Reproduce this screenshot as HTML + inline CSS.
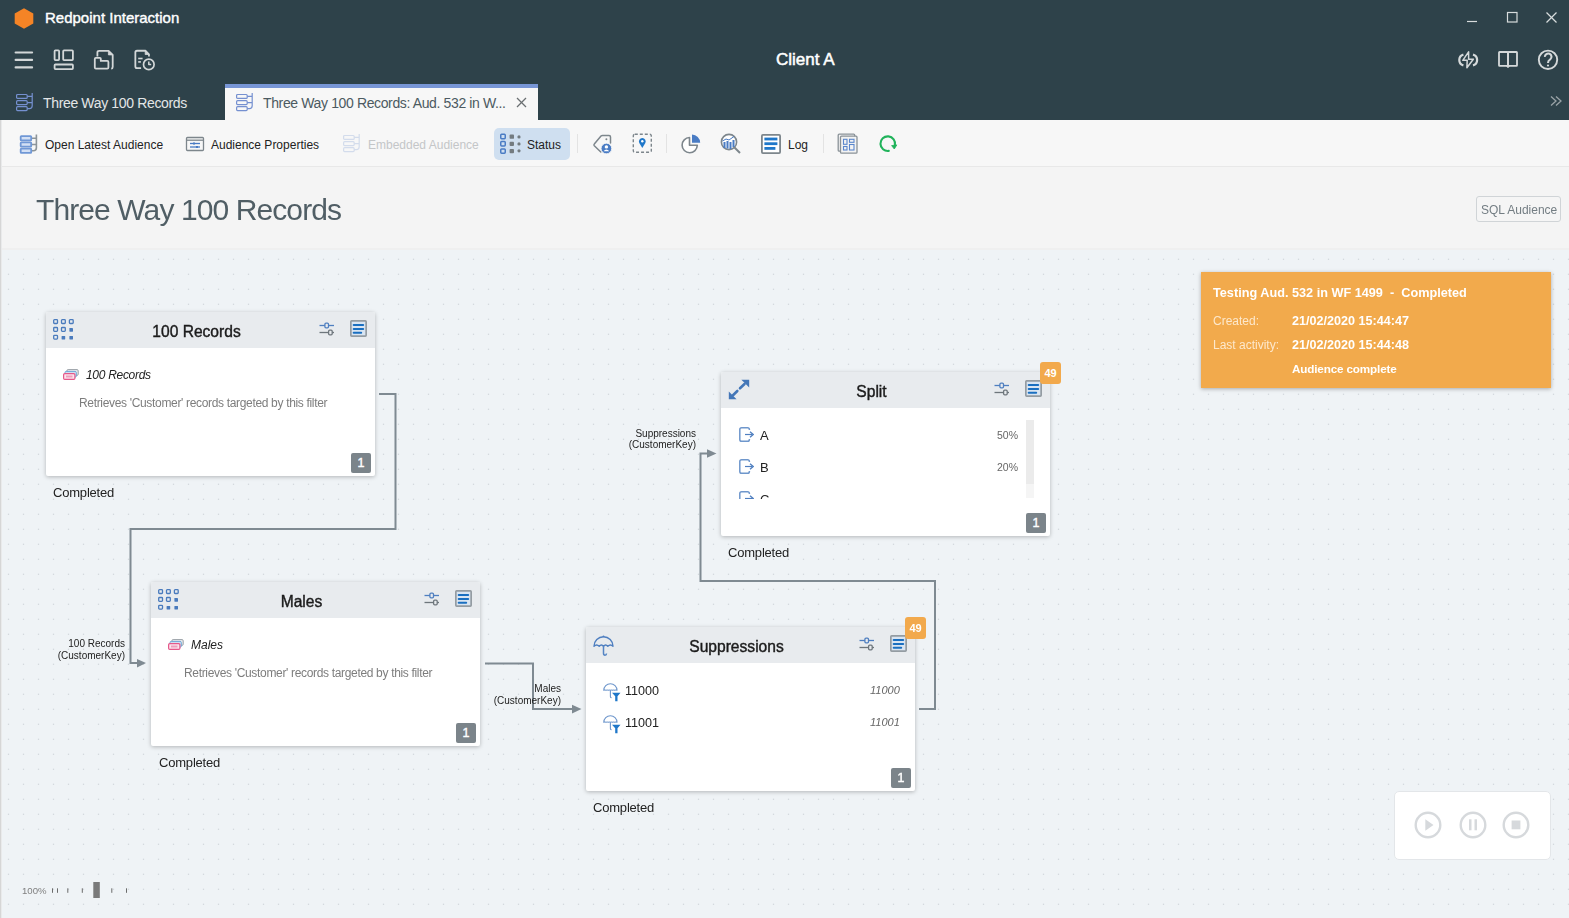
<!DOCTYPE html>
<html><head><meta charset="utf-8">
<style>
*{box-sizing:border-box;margin:0;padding:0}
html,body{width:1569px;height:918px;overflow:hidden;font-family:"Liberation Sans",sans-serif;background:#eff3f6}
.abs{position:absolute}
#hdr{position:absolute;left:0;top:0;width:1569px;height:120px;background:#2e424a}
.t{position:absolute;white-space:nowrap;line-height:1}
#hdr .t{color:#fff}
#toolbar{position:absolute;left:0;top:120px;width:1569px;height:47px;background:#f7f7f7;border-bottom:1px solid #e8e8e8}
#ph{position:absolute;left:0;top:167px;width:1569px;height:83px;background:#f4f4f4;border-bottom:2px solid #efefef}
#canvas{position:absolute;left:0;top:252px;width:1569px;height:666px;background-color:#eff3f6;
}
#lborder{position:absolute;left:0;top:120px;width:2px;height:798px;background:linear-gradient(90deg,#d6d6d6 0,#d6d6d6 1px,#e9eaeb 1px)}
.tbt{position:absolute;font-size:12px;color:#222;white-space:nowrap;line-height:1}
.node{position:absolute;width:329px;height:164px;background:#fff;border-radius:2px;box-shadow:0 1px 4px rgba(0,0,0,0.26)}
.nh{position:absolute;left:0;top:0;width:329px;height:36px;background:#e8ebee;border-radius:2px 2px 0 0}
.nt{position:absolute;left:-14px;width:329px;top:12px;text-align:center;font-size:15.6px;color:#1b1b1b;line-height:1;-webkit-text-stroke:0.4px #1b1b1b}
.badge1{position:absolute;width:20px;height:20px;background:#7b848a;color:#fff;font-size:12.5px;-webkit-text-stroke:0.4px #fff;text-align:center;line-height:20px;border-radius:2px}
.badge49{position:absolute;width:21px;height:22px;background:#f2a94c;color:#fff;font-size:11px;font-weight:bold;text-align:center;line-height:22px;border-radius:3px}
.stat{position:absolute;font-size:13px;letter-spacing:-0.2px;color:#222;white-space:nowrap;line-height:1}
.lbl{position:absolute;font-size:10px;color:#222;text-align:right;line-height:11.5px;white-space:nowrap}
</style></head><body>
<div id="hdr">
  <svg class="abs" style="left:14px;top:8px" width="20" height="21" viewBox="0 0 20 21"><polygon points="10,0.2 19.3,5.4 19.3,15.6 10,20.8 0.7,15.6 0.7,5.4" fill="#f58426"/></svg>
  <div class="t" style="left:45px;top:10px;font-size:15px;-webkit-text-stroke:0.4px #fff">Redpoint Interaction</div>
  <!-- window controls -->
  <svg class="abs" style="left:1460px;top:8px" width="105" height="20" viewBox="0 0 105 20" fill="none" stroke="#d8dcdd" stroke-width="1.2">
    <line x1="7" y1="13.5" x2="17" y2="13.5"/>
    <rect x="47.5" y="4.5" width="9.5" height="9.5"/>
    <line x1="86.5" y1="4.5" x2="96.5" y2="14.5"/><line x1="96.5" y1="4.5" x2="86.5" y2="14.5"/>
  </svg>
  <!-- row 2 icons -->
  <svg class="abs" style="left:10px;top:44px" width="150" height="32" viewBox="0 0 150 32" fill="none" stroke="#d3d7d8" stroke-width="1.8" stroke-linejoin="round">
    <g stroke-width="2.1" stroke-linecap="round"><line x1="5.6" y1="8.5" x2="22.1" y2="8.5"/><line x1="5.6" y1="15.9" x2="22.1" y2="15.9"/><line x1="5.6" y1="23.4" x2="22.1" y2="23.4"/></g>
    <rect x="44.6" y="6.4" width="4.5" height="9.7" rx="0.8"/><rect x="53.2" y="6.4" width="9.7" height="9.7" rx="0.8"/><rect x="44.6" y="20.5" width="18.3" height="4.6" rx="0.8"/>
    <path d="M87.4 12.5 V8.5 Q87.4 6.8 89.1 6.8 H98.6 L102.7 10.9 V23 Q102.7 24.6 101.2 24.6"/>
    <path d="M98.4 6.9 V10.9 H102.6 Z" fill="#d3d7d8" stroke-width="0.8"/>
    <path d="M84.8 15 Q84.8 13.9 85.9 13.9 H89.9 Q90.8 13.9 90.8 14.8 V16.9 H97.3 Q98.4 16.9 98.4 18 V23.6 Q98.4 24.6 97.3 24.6 H85.9 Q84.8 24.6 84.8 23.5 Z"/>
    <path d="M131.1 24.15 H127 Q125.35 24.15 125.35 22.5 V8.4 Q125.35 6.75 127 6.75 H135.4 L138.95 10.3 V12.4"/>
    <path d="M135.2 6.9 V10.5 H138.8 Z" fill="#d3d7d8" stroke-width="0.8"/>
    <g stroke-width="1.6"><line x1="128.2" y1="14.5" x2="132.6" y2="14.5"/><line x1="128.2" y1="17.9" x2="130.9" y2="17.9"/></g>
    <circle cx="138.8" cy="20.4" r="5.3" stroke-width="1.7"/>
    <path d="M138.8 17.6 V20.6 H141.2" stroke-width="1.5"/>
  </svg>
  <div class="t" style="left:776px;top:51px;font-size:17px;-webkit-text-stroke:0.5px #fff">Client A</div>
  <svg class="abs" style="left:1455px;top:46px" width="110" height="28" viewBox="0 0 110 28" fill="none" stroke="#d5d9da" stroke-width="2">
    <path d="M8.4 8.6 A5.6 5.6 0 0 0 8.4 19.4" stroke-width="2.2"/><path d="M18 8.6 A5.6 5.6 0 0 1 18 19.4" stroke-width="2.2"/>
    <path d="M13.6 5.8 L7.8 14.3 H12.2 L11.9 21.8 L18.3 13.2 H13.6 Z" stroke-width="1.5" stroke-linejoin="round"/>
    <rect x="44" y="6" width="9" height="13.8" rx="0.6" stroke-width="1.8"/><rect x="53" y="6" width="9" height="13.8" rx="0.6" stroke-width="1.8"/>
    <path d="M51.5 20.2 L53 21.6 L54.5 20.2 Z" fill="#d5d9da" stroke-width="1"/>
    <circle cx="93" cy="13.8" r="9.2" stroke-width="1.9"/>
    <path d="M89.9 10.9 A3.3 3.3 0 1 1 95.2 13.4 Q93 14.6 93 17" stroke-width="2.1"/><circle cx="93" cy="19.5" r="1.1" fill="#d5d9da" stroke="none"/>
  </svg>
  <!-- tabs -->
  <svg class="abs" style="left:14px;top:92px" width="22" height="21" viewBox="0 0 22 21" fill="none" stroke="#7590d0" stroke-width="1.2">
    <rect x="2.6" y="2.5" width="10.6" height="3.9" rx="1"/><rect x="2.6" y="8.7" width="10.6" height="3.9" rx="1"/><rect x="2.6" y="14.7" width="10.6" height="3.9" rx="1"/>
    <path d="M13.2 4.3 H18.2 M18.2 1 V13.8 Q18.2 16.6 15.4 16.6 H13.2 M13.2 10.6 H18.2" fill="none"/>
  </svg>
  <div class="t" style="left:43px;top:95.5px;font-size:14px;letter-spacing:-0.35px;color:#e3e6e7">Three Way 100 Records</div>
  <div class="abs" style="left:225px;top:84px;width:313px;height:36px;background:#f7f7f7;border-top:4px solid #7896d6"></div>
  <svg class="abs" style="left:234px;top:92px" width="22" height="21" viewBox="0 0 22 21" fill="none" stroke="#7590d0" stroke-width="1.2">
    <rect x="2.6" y="2.5" width="10.6" height="3.9" rx="1"/><rect x="2.6" y="8.7" width="10.6" height="3.9" rx="1"/><rect x="2.6" y="14.7" width="10.6" height="3.9" rx="1"/>
    <path d="M13.2 4.3 H18.2 M18.2 1 V13.8 Q18.2 16.6 15.4 16.6 H13.2 M13.2 10.6 H18.2" fill="none"/>
  </svg>
  <div class="t" style="left:263px;top:95.5px;font-size:14px;letter-spacing:-0.37px;color:#4c5a61">Three Way 100 Records: Aud. 532 in W...</div>
  <svg class="abs" style="left:514px;top:95px" width="14" height="14" viewBox="0 0 14 14" stroke="#6a6f72" stroke-width="1.2"><line x1="3" y1="3" x2="12" y2="12"/><line x1="12" y1="3" x2="3" y2="12"/></svg>
  <svg class="abs" style="left:1548px;top:94px" width="16" height="14" viewBox="0 0 16 14" fill="none" stroke="#9aa3a7" stroke-width="1.3"><path d="M3 2.5 L8 7 L3 11.5 M8 2.5 L13 7 L8 11.5"/></svg>
</div>
<div id="toolbar">
  <!-- open latest audience icon -->
  <svg class="abs" style="left:18px;top:14px" width="22" height="21" viewBox="0 0 22 21" stroke-width="1.6">
    <path d="M13.2 4.3 H18.4 M18.4 0.5 V13.7 Q18.4 16.7 15.4 16.7 H13.2 M13.2 10.5 H18.4" fill="none" stroke="#8d959a"/>
    <g fill="#d3e0f5" stroke="#7098d6" stroke-width="1.8"><rect x="2.7" y="2.2" width="10.5" height="4.2" rx="0.6"/><rect x="2.7" y="8.4" width="10.5" height="4.2" rx="0.6"/><rect x="2.7" y="14.6" width="10.5" height="4.2" rx="0.6"/></g>
  </svg>
  <div class="tbt" style="left:45px;top:18.7px">Open Latest Audience</div>
  <!-- audience properties icon -->
  <svg class="abs" style="left:185px;top:16px" width="20" height="16" viewBox="0 0 20 16" fill="none" stroke="#7d868c" stroke-width="1.3">
    <rect x="1.5" y="1.5" width="17" height="13" rx="1"/><line x1="1.5" y1="4.2" x2="18.5" y2="4.2"/>
    <line x1="5" y1="7.5" x2="15" y2="7.5" stroke="#4a7cc4"/><line x1="5" y1="11" x2="15" y2="11" stroke="#4a7cc4"/>
    <rect x="8" y="6.5" width="2" height="2" fill="#4a7cc4" stroke="none"/><rect x="11" y="10" width="2" height="2" fill="#4a7cc4" stroke="none"/>
  </svg>
  <div class="tbt" style="left:211px;top:18.7px">Audience Properties</div>
  <!-- embedded audience (disabled) -->
  <svg class="abs" style="left:341px;top:13px" width="22" height="21" viewBox="0 0 22 21" fill="none" stroke="#d3dcec" stroke-width="1.2">
    <rect x="2.6" y="2.5" width="10.6" height="3.9" rx="1"/><rect x="2.6" y="8.7" width="10.6" height="3.9" rx="1"/><rect x="2.6" y="14.7" width="10.6" height="3.9" rx="1"/>
    <path d="M13.2 4.3 H18.2 M18.2 1 V13.8 Q18.2 16.6 15.4 16.6 H13.2 M13.2 10.6 H18.2" fill="none"/>
  </svg>
  <div class="tbt" style="left:368px;top:18.7px;color:#c4c6c8">Embedded Audience</div>
  <!-- status button -->
  <div class="abs" style="left:494px;top:8px;width:76px;height:32px;background:#cfdff0;border-radius:5px"></div>
  <svg class="abs" style="left:499px;top:13px" width="24" height="22" viewBox="0 0 24 22">
    <g fill="none" stroke="#4a7cc4" stroke-width="1.5"><rect x="1.75" y="1.35" width="4.5" height="4.3" rx="0.9"/><rect x="1.75" y="8.6" width="4.5" height="4.3" rx="0.9"/><rect x="1.75" y="15.9" width="4.5" height="4.3" rx="0.9"/></g>
    <g fill="#737b80"><rect x="10.6" y="1.6" width="4.4" height="4.2" rx="0.9"/><rect x="10.6" y="8.8" width="4.4" height="4.2" rx="0.9"/><rect x="10.6" y="16" width="4.4" height="4.2" rx="0.9"/>
    <circle cx="20" cy="3.9" r="1.6"/><circle cx="20" cy="10.9" r="1.6"/><circle cx="20" cy="17.8" r="1.6"/></g>
  </svg>
  <div class="tbt" style="left:527px;top:18.5px">Status</div>
  <div class="abs" style="left:577px;top:14px;width:1px;height:19px;background:#e3e3e3"></div>
  <!-- tag person -->
  <svg class="abs" style="left:590px;top:12px" width="24" height="24" viewBox="0 0 24 24">
    <path d="M10.8 20 L4.3 13.8 Q3.5 13 4.3 12.1 L11 4.1 Q11.6 3.4 12.5 3.4 H19 Q20.5 3.4 20.5 4.9 V11" fill="none" stroke="#7d868c" stroke-width="1.5" stroke-linejoin="round" stroke-linecap="round"/>
    <circle cx="16.4" cy="7.3" r="1" fill="#7d868c"/>
    <circle cx="16.4" cy="16.5" r="5.3" fill="#4a7cc4" stroke="#f7f7f7" stroke-width="0.8"/><circle cx="16.4" cy="14.9" r="1.7" fill="#fff"/><path d="M13.5 19.2 Q16.4 15.8 19.3 19.2 Z" fill="#fff"/>
  </svg>
  <!-- dashed pin -->
  <svg class="abs" style="left:632px;top:13px" width="22" height="22" viewBox="0 0 22 22">
    <rect x="1.3" y="1.3" width="18" height="18" rx="1.5" fill="none" stroke="#7d868c" stroke-width="1.4" stroke-dasharray="3 2"/>
    <path d="M10.3 15 L7.3 10 A3.4 3.4 0 1 1 13.3 10 Z" fill="#1f77c9"/><circle cx="10.3" cy="8.2" r="1.2" fill="#fff"/>
  </svg>
  <div class="abs" style="left:666px;top:14px;width:1px;height:19px;background:#e3e3e3"></div>
  <!-- pie -->
  <svg class="abs" style="left:679px;top:12px" width="24" height="24" viewBox="0 0 24 24">
    <path d="M10.5 5.5 A7.6 7.6 0 1 0 18.3 13.3 H10.5 Z" fill="#fff" stroke="#7d868c" stroke-width="1.6" stroke-linejoin="round"/>
    <path d="M13 2.5 A8.5 8.5 0 0 1 21.2 10.8 H13 Z" fill="#4a7cc4"/>
  </svg>
  <!-- magnifier chart -->
  <svg class="abs" style="left:719px;top:12px" width="24" height="24" viewBox="0 0 24 24">
    <circle cx="10" cy="10" r="7.6" fill="#fff" stroke="#7d868c" stroke-width="1.6"/>
    <line x1="15.5" y1="15.5" x2="21" y2="21" stroke="#7d868c" stroke-width="2"/>
    <g fill="#4a7cc4"><rect x="4.5" y="10" width="2" height="6"/><rect x="7.5" y="9" width="2" height="7.5"/><rect x="10.5" y="10" width="2" height="7"/><rect x="13.5" y="8" width="2" height="7"/></g>
    <path d="M3.5 9 L7 7 L10 8 L15 4.5" fill="none" stroke="#4a7cc4" stroke-width="1"/>
  </svg>
  <!-- log -->
  <svg class="abs" style="left:760px;top:13px" width="22" height="22" viewBox="0 0 22 22">
    <rect x="1.9" y="1.9" width="18.2" height="18.2" rx="1" fill="#fff" stroke="#7d868c" stroke-width="1.8"/>
    <rect x="4.4" y="4.6" width="13" height="2.8" fill="#1f77c9"/><rect x="4.4" y="9.3" width="13" height="2.8" fill="#1f77c9"/><rect x="4.4" y="14" width="11" height="2.8" fill="#1f77c9"/>
  </svg>
  <div class="tbt" style="left:788px;top:18.7px">Log</div>
  <div class="abs" style="left:823px;top:14px;width:1px;height:19px;background:#e3e3e3"></div>
  <!-- multi -->
  <svg class="abs" style="left:837px;top:13px" width="22" height="22" viewBox="0 0 22 22">
    <rect x="1.2" y="1.2" width="16.5" height="17" rx="1" fill="#f3f3f3" stroke="#8a9298" stroke-width="1.3"/>
    <rect x="3.5" y="3.2" width="16.5" height="17" rx="1" fill="#f3f3f3" stroke="#8a9298" stroke-width="1.3"/>
    <g fill="none" stroke="#5a86cc" stroke-width="1.1"><rect x="6.5" y="6.3" width="3.5" height="5"/><rect x="12.5" y="6.3" width="4.5" height="3"/><rect x="6.5" y="13.5" width="3.5" height="3.5"/><rect x="12.5" y="11.5" width="4.5" height="5.5"/></g>
  </svg>
  <!-- refresh -->
  <svg class="abs" style="left:877px;top:13px" width="22" height="22" viewBox="0 0 22 22">
    <path d="M11.8 17.9 A7.3 7.3 0 1 1 17.9 12.2" fill="none" stroke="#21b35b" stroke-width="2.1" stroke-linecap="round"/>
    <path d="M14.6 12.6 L19.8 11.9 L17.3 16 Z" fill="#21b35b" stroke="#21b35b" stroke-width="0.8" stroke-linejoin="round"/>
  </svg>
</div>

<div id="ph">
  <div class="t" style="left:36px;top:195px;font-size:30px;color:#505e65;letter-spacing:-0.9px;position:fixed">Three Way 100 Records</div>
  <div class="abs" style="left:1476px;top:29px;width:85px;height:26px;border:1px solid #d0d4d7;border-radius:3px;background:#f5f5f5"></div>
  <div class="t" style="left:1481px;top:204px;position:fixed;font-size:12px;color:#737d83">SQL Audience</div>
</div>

<div id="canvas"></div>
<svg class="abs" style="left:0;top:252px" width="1569" height="666"><defs><pattern id="dots" x="0" y="0" width="15" height="15" patternUnits="userSpaceOnUse"><rect x="7.85" y="6.6" width="1.3" height="1.35" fill="#d4d8dd"/></pattern></defs><rect width="1569" height="666" fill="url(#dots)"/></svg>
<svg width="0" height="0" style="position:absolute">
 <defs>
  <symbol id="grid" viewBox="0 0 22 22">
   <g fill="none" stroke="#4a7bbd" stroke-width="1.3">
    <rect x="0.7" y="0.7" width="3.8" height="3.8" rx="0.8"/><rect x="8.5" y="0.7" width="3.8" height="3.8" rx="0.8"/><rect x="16.4" y="0.7" width="3.8" height="3.8" rx="0.8"/>
    <rect x="0.7" y="8.5" width="3.8" height="3.8" rx="0.8"/><rect x="8.5" y="8.5" width="3.8" height="3.8" rx="0.8"/>
    <rect x="0.7" y="16.3" width="3.8" height="3.8" rx="0.8"/>
   </g>
   <g fill="#4a7bbd"><rect x="16.4" y="9.1" width="3.6" height="3.6" rx="0.4"/><rect x="8.6" y="16.9" width="3.6" height="3.6" rx="0.4"/><rect x="16.4" y="16.9" width="3.6" height="3.6" rx="0.4"/></g>
  </symbol>
  <symbol id="sliders" viewBox="0 0 16 14">
   <g stroke-width="1.3" fill="none">
    <line x1="0.5" y1="3.5" x2="15" y2="3.5" stroke="#4f7fc0"/><rect x="5.9" y="1.1" width="3.6" height="4.8" rx="1.1" fill="#e8ebee" stroke="#4f7fc0"/>
    <line x1="0.5" y1="10.5" x2="15" y2="10.5" stroke="#6e767c"/><rect x="9.6" y="8.1" width="3.6" height="4.8" rx="1.1" fill="#e8ebee" stroke="#6e767c"/>
   </g>
  </symbol>
  <symbol id="list" viewBox="0 0 17 17">
   <rect x="0.85" y="0.85" width="15.3" height="15.3" rx="0.8" fill="#d9e5f2" stroke="#949ca2" stroke-width="1.7"/>
   <g stroke="#1a6fc0" stroke-width="2" stroke-linecap="round"><line x1="3.7" y1="5" x2="13.2" y2="5"/><line x1="3.7" y1="8.9" x2="13.2" y2="8.9"/><line x1="3.7" y1="12.8" x2="11.2" y2="12.8"/></g>
  </symbol>
  <symbol id="recs" viewBox="0 0 16 11">
   <rect x="3.9" y="0.6" width="11.3" height="5.8" rx="1.2" fill="#e9ecef" stroke="#9aa0a6" stroke-width="1"/>
   <rect x="2" y="2.4" width="11.3" height="5.8" rx="1.2" fill="#cfe0f1" stroke="#6fa5d6" stroke-width="1"/>
   <rect x="0.6" y="4.6" width="11.3" height="5.8" rx="1.2" fill="#fbe3ec" stroke="#e5588a" stroke-width="1.2"/>
   <rect x="3" y="6.5" width="6.5" height="2" fill="#ee9fbd"/>
  </symbol>
  <symbol id="exit" viewBox="0 0 15 15">
   <path d="M10.4 3 V2.5 Q10.4 0.8 8.6 0.8 H2.6 Q0.8 0.8 0.8 2.6 V12.4 Q0.8 14.2 2.6 14.2 H8.6 Q10.4 14.2 10.4 12.4 V12" fill="none" stroke="#6f97cc" stroke-width="1.5"/>
   <line x1="6" y1="7.5" x2="13" y2="7.5" stroke="#4f7fc0" stroke-width="1.2"/>
   <path d="M11 4.8 L14.2 7.5 L11 10.2" fill="none" stroke="#4f7fc0" stroke-width="1.3"/>
  </symbol>
  <symbol id="umb" viewBox="0 0 21 21">
   <path d="M1 11.3 A9.5 9.5 0 0 1 20 11.3 Q17.4 8.6 14.8 11.3 Q12.6 8.6 10.5 11.3 Q8.4 8.6 6.2 11.3 Q3.6 8.6 1 11.3 Z" fill="none" stroke="#4f7fc0" stroke-width="1.4" stroke-linejoin="round"/>
   <path d="M10.5 10.8 V18.3 Q10.5 20.2 12 20.2 Q13.5 20.2 13.5 18.5" fill="none" stroke="#5585c4" stroke-width="1.5"/>
   <circle cx="10.5" cy="1.3" r="0.9" fill="#4f7fc0"/>
  </symbol>
  <symbol id="umbf" viewBox="0 0 18 19">
   <path d="M0.8 7.3 A6.6 6.6 0 0 1 14 7.3 Q12.9 6.7 11.8 7.3 Q10.4 6.7 9.5 7.3 Q8.4 6.7 7.4 7.3 Q6.3 6.7 5.3 7.3 Q4.1 6.7 3 7.3 Q1.9 6.7 0.8 7.3 Z" fill="none" stroke="#6f97cc" stroke-width="1.1" stroke-linejoin="round"/>
   <path d="M7.4 7.3 V13.5 Q7.4 14.8 8.6 14.8" fill="none" stroke="#6f97cc" stroke-width="1.1"/>
   <path d="M9 9.8 H17.5 L14.5 13.2 V18.2 H12.2 V13.2 Z" fill="#1f77c9"/>
  </symbol>
  <symbol id="expand" viewBox="0 0 22 21">
   <g fill="#4477b8"><path d="M13.4 0.8 H21.2 V8.6 Z"/><path d="M0.8 12.4 V20.2 H8.6 Z"/></g>
   <g stroke="#4477b8" stroke-width="2.6" stroke-linecap="round"><line x1="16.5" y1="5" x2="12" y2="9.3"/><line x1="9.3" y1="12" x2="5" y2="16.2"/></g>
  </symbol>
 </defs>
</svg>
<!-- connectors -->
<svg class="abs" style="left:0;top:0" width="1569" height="918">
 <g fill="none" stroke="#7f8a92" stroke-width="2">
  <path d="M379 394 H395.5 V529 H130.5 V663 H138"/>
  <path d="M485 663.5 H533 V709 H573"/>
  <path d="M919 709 H935 V581 H700.5 V453.5 H708"/>
 </g>
 <g fill="#7f8a92">
  <path d="M137 659 L146 663 L137 667.5 Z"/>
  <path d="M572 704.8 L581.5 709 L572 713.5 Z"/>
  <path d="M707 449.3 L716.5 453.5 L707 457.8 Z"/>
 </g>
</svg>
<div class="lbl" style="left:25px;top:638px;width:100px">100 Records<br>(CustomerKey)</div>
<div class="lbl" style="left:461px;top:683px;width:100px">Males<br>(CustomerKey)</div>
<div class="lbl" style="left:596px;top:427.5px;width:100px">Suppressions<br>(CustomerKey)</div>

<!-- node 1 -->
<div class="node" style="left:46px;top:312px">
 <div class="nh"></div>
 <svg class="abs" style="left:7px;top:7px" width="22" height="22"><use href="#grid"/></svg>
 <div class="nt">100 Records</div>
 <svg class="abs" style="left:273px;top:10px" width="16" height="14"><use href="#sliders"/></svg>
 <svg class="abs" style="left:304px;top:8px" width="17" height="17"><use href="#list"/></svg>
 <svg class="abs" style="left:17px;top:57px" width="16" height="11"><use href="#recs"/></svg>
 <div class="t" style="left:40px;top:56.5px;font-size:12px;font-style:italic;color:#222;letter-spacing:-0.3px">100 Records</div>
 <div class="t" style="left:33px;top:85px;font-size:12px;color:#7d7d7d;letter-spacing:-0.33px">Retrieves 'Customer' records targeted by this filter</div>
 <div class="badge1" style="left:305px;top:141px">1</div>
</div>
<div class="stat" style="left:53px;top:486px">Completed</div>

<!-- node males -->
<div class="node" style="left:151px;top:582px">
 <div class="nh"></div>
 <svg class="abs" style="left:7px;top:7px" width="22" height="22"><use href="#grid"/></svg>
 <div class="nt">Males</div>
 <svg class="abs" style="left:273px;top:10px" width="16" height="14"><use href="#sliders"/></svg>
 <svg class="abs" style="left:304px;top:8px" width="17" height="17"><use href="#list"/></svg>
 <svg class="abs" style="left:17px;top:57px" width="16" height="11"><use href="#recs"/></svg>
 <div class="t" style="left:40px;top:56.5px;font-size:12px;font-style:italic;color:#222">Males</div>
 <div class="t" style="left:33px;top:85px;font-size:12px;color:#7d7d7d;letter-spacing:-0.33px">Retrieves 'Customer' records targeted by this filter</div>
 <div class="badge1" style="left:305px;top:141px">1</div>
</div>
<div class="stat" style="left:159px;top:756px">Completed</div>

<!-- split -->
<div class="node" style="left:721px;top:372px">
 <div class="nh"></div>
 <svg class="abs" style="left:7px;top:7px" width="22" height="21"><use href="#expand"/></svg>
 <div class="nt">Split</div>
 <svg class="abs" style="left:273px;top:10px" width="16" height="14"><use href="#sliders"/></svg>
 <svg class="abs" style="left:304px;top:8px" width="17" height="17"><use href="#list"/></svg>
 <div class="abs" style="left:0;top:36px;width:329px;height:91px;overflow:hidden">
  <svg class="abs" style="left:18px;top:19px" width="15" height="15"><use href="#exit"/></svg>
  <div class="t" style="left:39px;top:21px;font-size:13px;color:#222">A</div>
  <div class="t" style="left:237px;width:60px;text-align:right;top:21.5px;font-size:10.5px;color:#666">50%</div>
  <svg class="abs" style="left:18px;top:51px" width="15" height="15"><use href="#exit"/></svg>
  <div class="t" style="left:39px;top:53px;font-size:13px;color:#222">B</div>
  <div class="t" style="left:237px;width:60px;text-align:right;top:53.5px;font-size:10.5px;color:#666">20%</div>
  <svg class="abs" style="left:18px;top:83px" width="15" height="15"><use href="#exit"/></svg>
  <div class="t" style="left:39px;top:85px;font-size:13px;color:#222">C</div>
  <div class="abs" style="left:305px;top:12px;width:8px;height:78px;background:#f5f5f5"></div>
  <div class="abs" style="left:305px;top:12px;width:8px;height:64px;background:#ebebeb"></div>
 </div>
 <div class="badge1" style="left:305px;top:141px">1</div>
 <div class="badge49" style="left:319px;top:-10px">49</div>
</div>
<div class="stat" style="left:728px;top:546px">Completed</div>

<!-- suppressions -->
<div class="node" style="left:586px;top:627px">
 <div class="nh"></div>
 <svg class="abs" style="left:7px;top:8px" width="21" height="21"><use href="#umb"/></svg>
 <div class="nt">Suppressions</div>
 <svg class="abs" style="left:273px;top:10px" width="16" height="14"><use href="#sliders"/></svg>
 <svg class="abs" style="left:304px;top:8px" width="17" height="17"><use href="#list"/></svg>
 <svg class="abs" style="left:17px;top:56px" width="18" height="19"><use href="#umbf"/></svg>
 <div class="t" style="left:39px;top:57.5px;font-size:12.6px;color:#222">11000</div>
 <div class="t" style="left:284px;top:58px;font-size:11px;font-style:italic;color:#666">11000</div>
 <svg class="abs" style="left:17px;top:88px" width="18" height="19"><use href="#umbf"/></svg>
 <div class="t" style="left:39px;top:89.5px;font-size:12.6px;color:#222">11001</div>
 <div class="t" style="left:284px;top:90px;font-size:11px;font-style:italic;color:#666">11001</div>
 <div class="badge1" style="left:305px;top:141px">1</div>
 <div class="badge49" style="left:319px;top:-10px">49</div>
</div>
<div class="stat" style="left:593px;top:801px">Completed</div>

<!-- status box -->
<div class="abs" style="left:1201px;top:272px;width:350px;height:116px;background:#f2aa4c;box-shadow:0 1px 4px rgba(0,0,0,0.3)">
 <div class="t" style="left:12px;top:15px;font-size:12.7px;font-weight:bold;color:#fff">Testing Aud. 532 in WF 1499&nbsp; - &nbsp;Completed</div>
 <div class="t" style="left:12px;top:43px;font-size:12px;color:#fde8cc">Created:</div>
 <div class="t" style="left:91px;top:43px;font-size:12.6px;font-weight:bold;color:#fff">21/02/2020 15:44:47</div>
 <div class="t" style="left:12px;top:67px;font-size:12px;color:#fde8cc">Last activity:</div>
 <div class="t" style="left:91px;top:67px;font-size:12.6px;font-weight:bold;color:#fff">21/02/2020 15:44:48</div>
 <div class="t" style="left:91px;top:91px;font-size:11.7px;letter-spacing:-0.15px;font-weight:bold;color:#fff">Audience complete</div>
</div>

<!-- play controls -->
<div class="abs" style="left:1394px;top:791px;width:157px;height:69px;background:#fff;border:1px solid #e3e6e9;border-radius:5px"></div>
<svg class="abs" style="left:1410px;top:807px" width="125" height="36" viewBox="0 0 125 36">
 <g fill="none" stroke="#d6d9dc" stroke-width="2.4"><circle cx="18" cy="18" r="12.3"/><circle cx="63" cy="18" r="12.3"/><circle cx="106" cy="18" r="12.3"/></g>
 <g fill="#d6d9dc"><path d="M15.3 12.3 L23.5 18 L15.3 23.7 Z"/><rect x="59" y="12.3" width="2.5" height="11"/><rect x="64.5" y="12.3" width="2.5" height="11"/><rect x="101.6" y="13.5" width="8.8" height="8.8"/></g>
</svg>

<!-- zoom slider -->
<div class="t" style="left:22px;top:886px;font-size:9.6px;color:#808080">100%</div>
<svg class="abs" style="left:48px;top:880px" width="85" height="20" viewBox="0 0 85 20">
 <g fill="#6b6b6b"><rect x="4" y="8.3" width="1" height="4.5"/><rect x="9" y="8.3" width="1" height="4.5"/><rect x="19.3" y="8.3" width="1" height="4.5"/><rect x="33.8" y="8.3" width="1" height="4.5"/><rect x="63.3" y="8.3" width="1" height="4.5"/><rect x="78" y="8.3" width="1" height="4.5"/>
 <rect x="45.3" y="2" width="6.5" height="16" fill="#7a7a7a"/></g>
</svg>

<div id="lborder"></div>

</body></html>
